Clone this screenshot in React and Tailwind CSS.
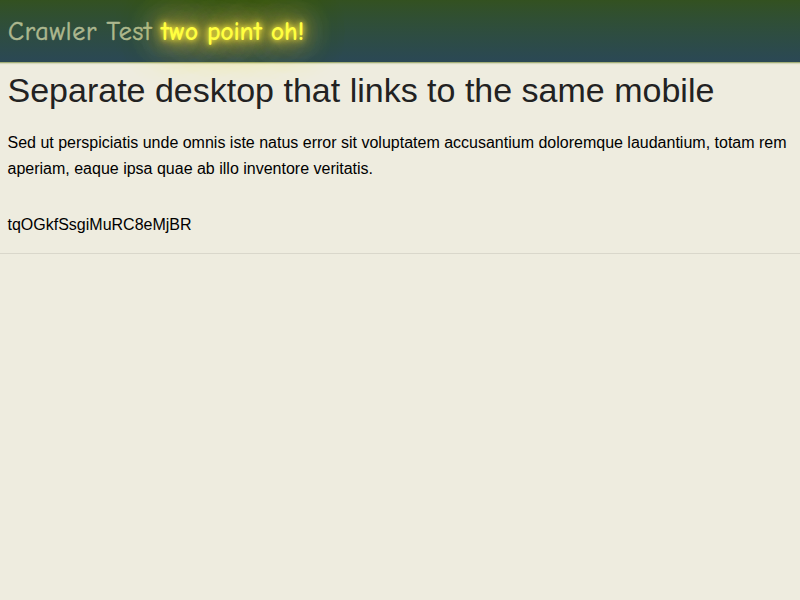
export default function App() {
  return (
    <div className="min-h-screen bg-[#eeecdf] font-['Liberation_Sans',Arial,sans-serif] text-[#222]">
      <header className="relative flex h-[63px] items-center border-b border-[#a3ae78] bg-linear-to-b from-[#335120] to-[#2b4855] px-2 pt-[2px] shadow-[0_1px_1px_#d5d8bd]">
        <div className="font-['Comic_Sans_MS','Comic_Neue',cursive] text-[26px] leading-none whitespace-pre text-[#adb88f]">
          <span className="tracking-[0.75px] [-webkit-text-stroke:0.5px_#adb88f]">Crawler Test </span>
          <span className="-ml-px font-bold tracking-[-0.25px] text-[#ffff40] [text-shadow:0_0_5px_#e8dc3c,0_0_10px_#e8dc3c,0_0_18px_#f0c830,0_0_34px_#ffa050,0_0_44px_#ffdc50,0_0_50px_#ffff40]">two point oh!</span>
        </div>
      </header>
      <main className="border-b border-[#d9d7cb] px-2 pt-[3px] pb-[15px]">
        <h1 className="relative -ml-[0.5px] text-[34px] leading-[48px]">Separate desktop that links to the same mobile</h1>
        <p className="mt-4 -ml-[0.5px] text-[16px] leading-[26px] text-black">Sed ut perspiciatis unde omnis iste natus error sit voluptatem accusantium doloremque laudantium, totam rem aperiam, eaque ipsa quae ab illo inventore veritatis.</p>
        <p className="mt-[30px] -ml-[0.5px] text-[16px] leading-[26px] text-black">tqOGkfSsgiMuRC8eMjBR</p>
      </main>
    </div>
  );
}
